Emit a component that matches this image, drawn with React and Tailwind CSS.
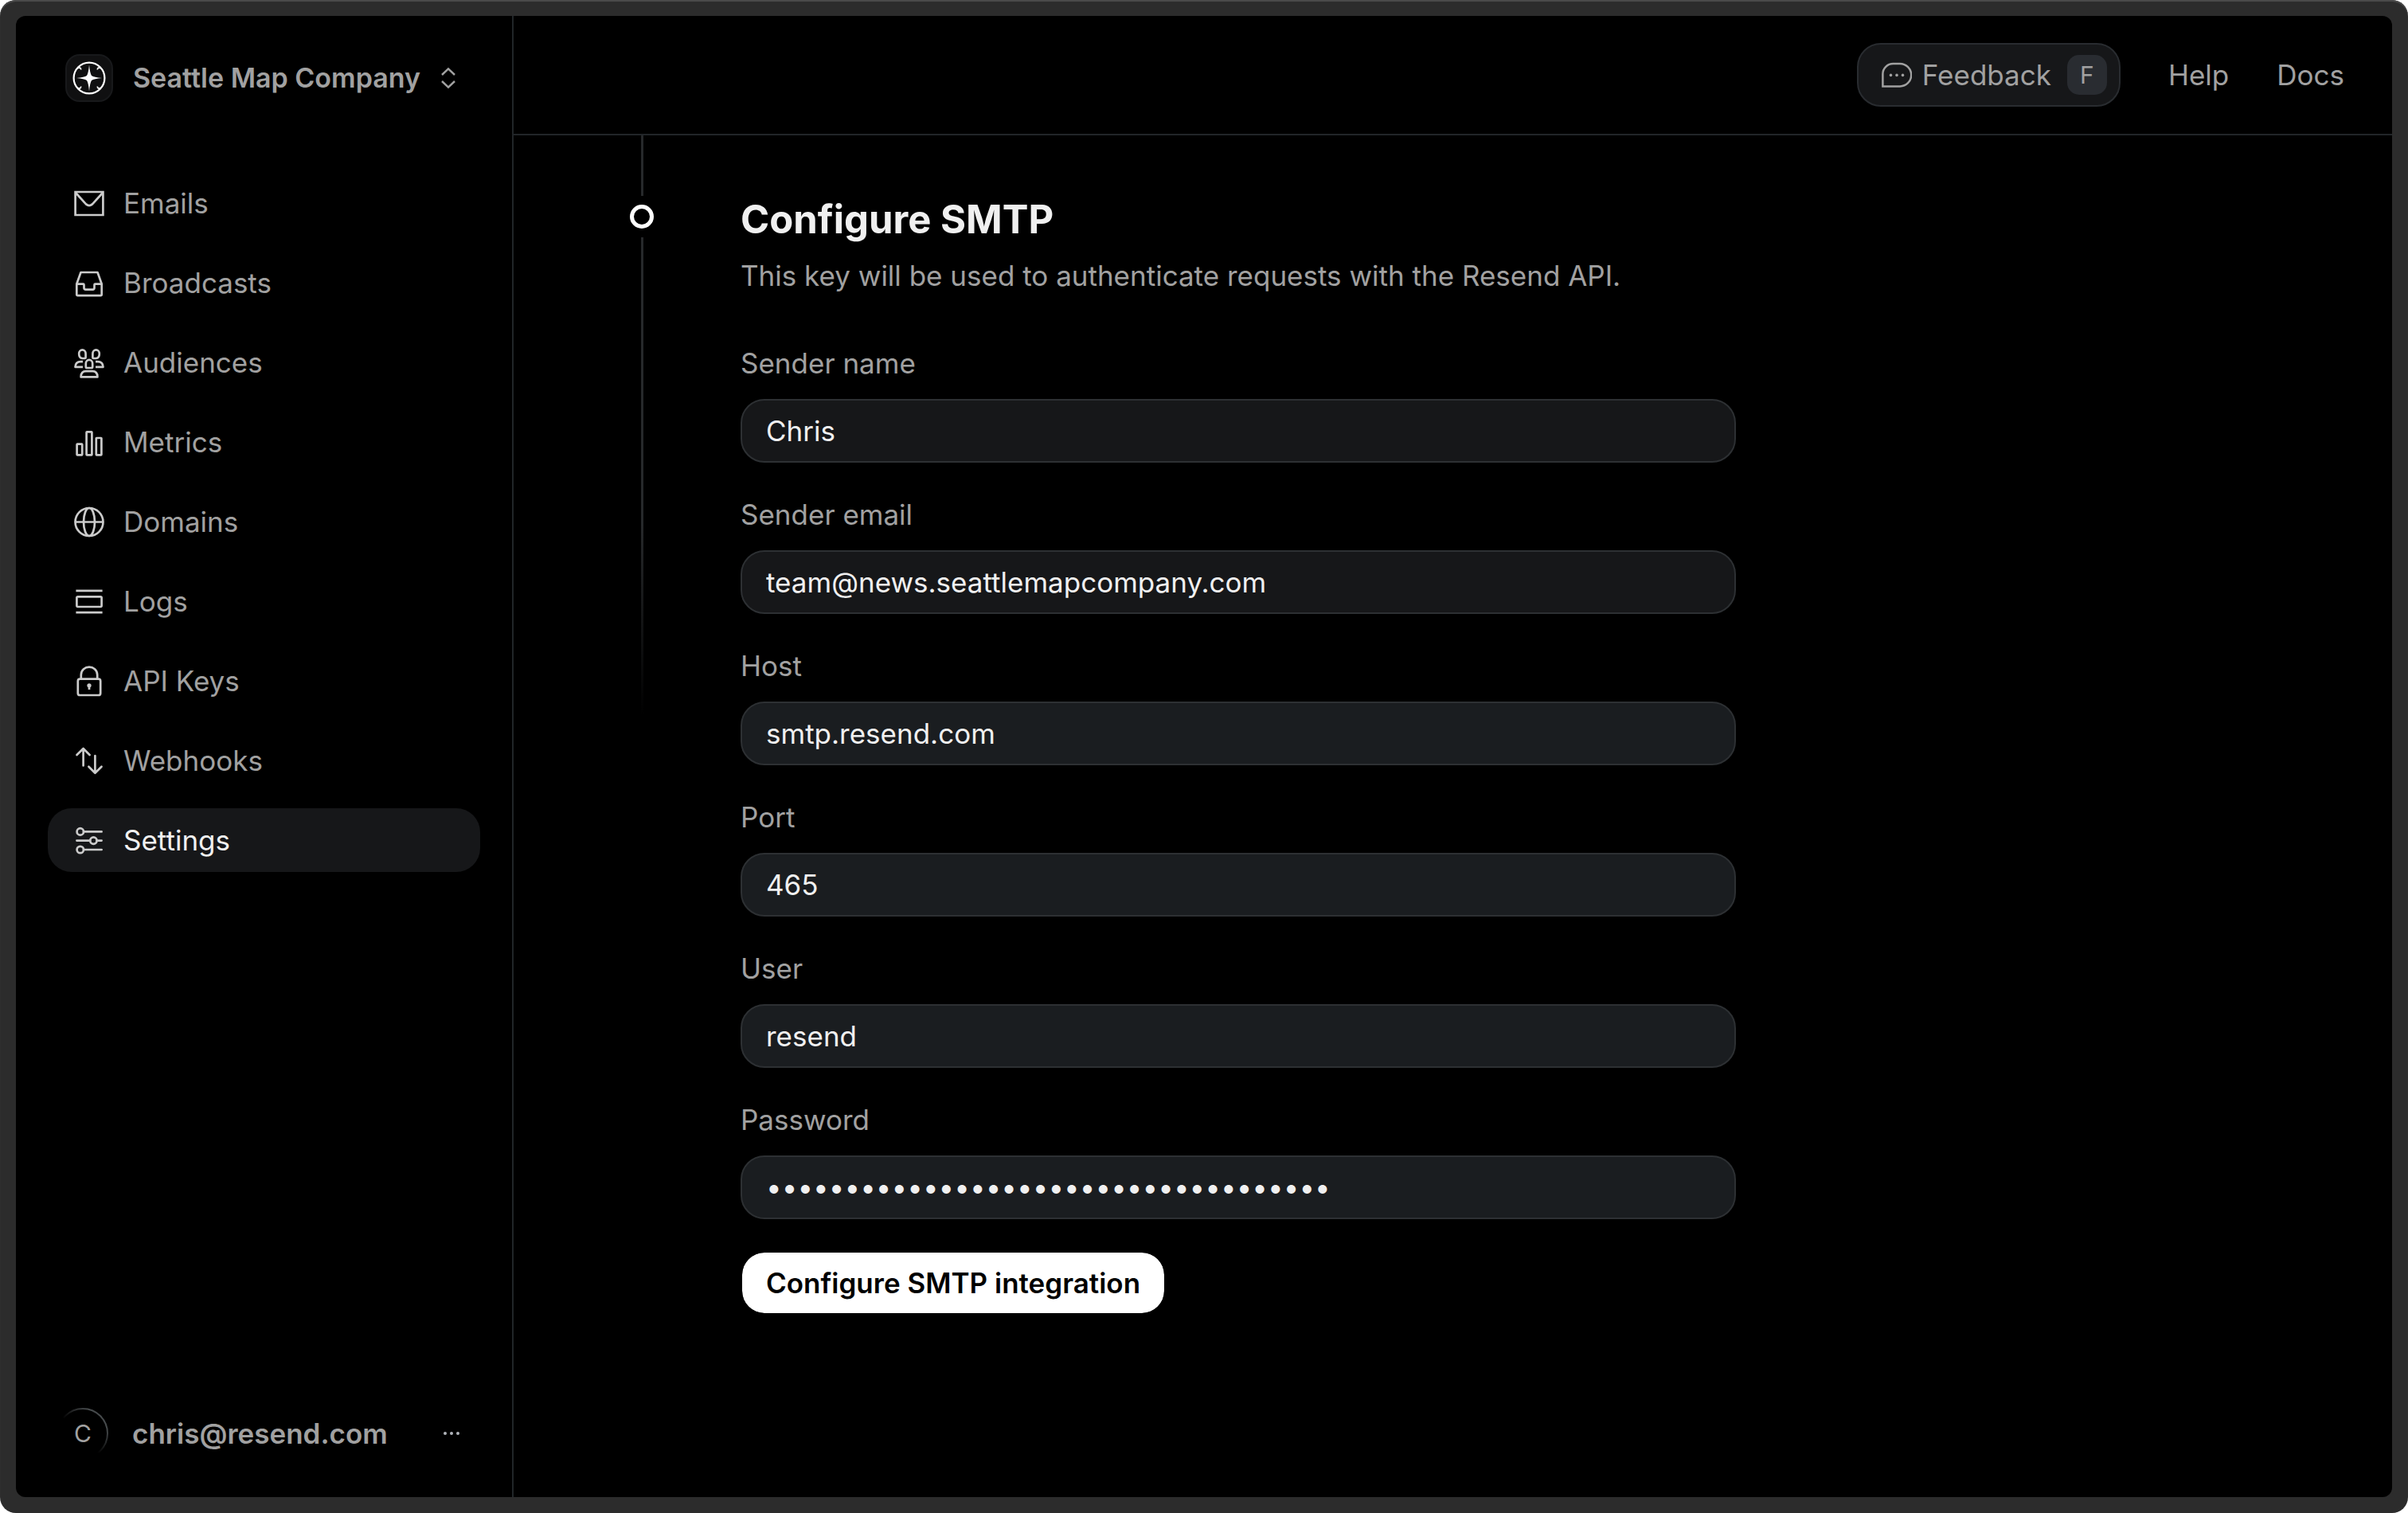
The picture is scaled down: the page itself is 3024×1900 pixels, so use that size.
const P = (props) => (
  <svg
    viewBox="-20 -20 40 40"
    className="size-10 shrink-0"
    fill="none"
    stroke="currentColor"
    strokeWidth="2.7"
    strokeLinejoin="round"
    aria-hidden="true"
  >
    {props.children}
  </svg>
);

const icons = {
  mail: (
    <P>
      <path strokeLinejoin="miter" d="M-17.4 -14H17.4V15H-17.4Z" />
      <path d="M-17 -13L-4 1.4Q0 4.8 4 1.4L17 -13" />
    </P>
  ),
  inbox: (
    <P>
      <path d="M-10.5 -13H10.5L15.7 1.5V14.8Q15.7 16.2 14.3 16.2H-14.3Q-15.7 16.2 -15.7 14.8V1.5Z" />
      <path d="M-15.7 1.7H-7.5Q-6.5 1.7 -6.5 2.7V6.5Q-6.5 8.6 -4.4 8.6H4.4Q6.5 8.6 6.5 6.5V2.7Q6.5 1.7 7.5 1.7H15.7" />
    </P>
  ),
  people: (
    <P>
      <path d="M-12.8 -10.8C-12.8 -17.2 -4.4 -17.2 -4.4 -10.8V-6Q-4.4 -5 -5.4 -5H-8.6Q-12.8 -5.4 -12.8 -10.8Z" />
      <path d="M12.8 -10.8C12.8 -17.2 4.4 -17.2 4.4 -10.8V-6Q4.4 -5 5.4 -5H8.6Q12.8 -5.4 12.8 -10.8Z" />
      <path d="M-4.2 1.6C-4.2 -4.6 4.2 -4.6 4.2 1.6V5.4Q4.2 7 2.6 7H-2.6Q-4.2 7 -4.2 5.4Z" />
      <path d="M-8 -.8H-10.5C-15 -.8 -17.3 2 -17.5 5.9H-8M8 -.8H10.5C15 -.8 17.3 2 17.5 5.9H8" />
      <path d="M-10.4 18.4C-10.4 13.6 -8.2 11.2 -4 11.2H4C8.2 11.2 10.4 13.6 10.4 18.4Z" />
    </P>
  ),
  bars: (
    <P>
      <rect x="-15.4" y="2.6" width="6.6" height="13.8" rx=".6" />
      <rect x="-3.4" y="-12.6" width="6.8" height="29" rx=".6" />
      <rect x="8.8" y="-5" width="6.6" height="21.4" rx=".6" />
    </P>
  ),
  globe: (
    <P>
      <circle r="17.5" cx="0" cy=".5" />
      <ellipse rx="7" ry="17.5" cx="0" cy=".5" />
      <path d="M-17.5 .5H17.5" />
    </P>
  ),
  logs: (
    <P>
      <path d="M-16.6 -13.2H16.6M-16.6 14.2H16.6" />
      <rect x="-15.6" y="-5.6" width="31.2" height="12.6" rx="1.4" />
    </P>
  ),
  lock: (
    <P>
      <rect x="-14.2" y="-2.4" width="28.4" height="20.4" rx="2.6" />
      <path d="M-10.2 -2.4V-7.4C-10.2 -20.6 10.2 -20.6 10.2 -7.4V-2.4" />
      <path d="M0 5.6V11" />
      <circle cy="5.8" r="1.3" />
    </P>
  ),
  arrows: (
    <P>
      <path strokeLinecap="round" d="M-7.4 6.4V-15M-15.5 -7L-7.4 -15L.6 -7M7.4 -6V15.8M-.6 7.8L7.4 15.8L15.5 7.8" />
    </P>
  ),
  sliders: (
    <P>
      <circle cx="-11.2" cy="-10.6" r="4.2" />
      <circle cx="5.4" cy=".6" r="4.2" />
      <circle cx="-11.2" cy="12" r="4.2" />
      <path strokeLinecap="round" d="M-7 -10.6H15.6M-15.6 .6H1.2M9.6 .6H15.6M-7 12H15.6" />
    </P>
  ),
};

const nav = [
  ["Emails", "mail"],
  ["Broadcasts", "inbox"],
  ["Audiences", "people"],
  ["Metrics", "bars"],
  ["Domains", "globe"],
  ["Logs", "logs"],
  ["API Keys", "lock"],
  ["Webhooks", "arrows"],
  ["Settings", "sliders"],
];

const fields = [
  { id: "sender-name", label: "Sender name", value: "Chris" },
  { id: "sender-email", label: "Sender email", value: "team@news.seattlemapcompany.com", type: "email" },
  { id: "host", label: "Host", value: "smtp.resend.com", readOnly: true },
  { id: "port", label: "Port", value: "465", readOnly: true },
  { id: "user", label: "User", value: "resend", readOnly: true },
  { id: "password", label: "Password", value: "re_abcdefgh_ijklmnopqrstuvwxyz012345", type: "password", readOnly: true },
];

function Logo() {
  return (
    <span className="flex size-15 items-center justify-center rounded-[18px] border-2 border-[#18191b] bg-[#101011]">
      <svg viewBox="-22 -22 44 44" className="size-11" fill="none" stroke="#fff" aria-hidden="true">
        <circle r="19.4" strokeWidth="2.2" />
        <path fill="#fff" stroke="none" d="M0 -16.5Q1 -6 3 -3Q6 -1 16 0Q6 1 3 3Q1 6 0 16.5Q-1 6 -3 3Q-6 1 -16 0Q-6 -1 -3 -3Q-1 -6 0 -16.5Z" />
        <path strokeWidth="1.8" d="M-14.5 -12.5Q-10 -14 -10.5 -10.5M14.5 -12.5Q10 -14 10.5 -10.5M-14.5 12.5Q-10 14 -10.5 10.5M14.5 12.5Q10 14 10.5 10.5" />
      </svg>
    </span>
  );
}

function Sidebar() {
  return (
    <aside className="flex w-[625px] shrink-0 flex-col border-r-2 border-[#212528] px-10">
      <button type="button" className="mt-12 flex items-center pl-[22px] text-left">
        <Logo />
        <span className="ml-[25px] text-[34px] leading-[60px] font-semibold">Seattle Map Company</span>
        <svg viewBox="0 0 18 28" className="ml-[26px] h-7 w-[18px]" fill="none" stroke="currentColor" strokeWidth="2.5" aria-hidden="true">
          <path d="M1 10L9 2.4L17 10M1 18L9 25.6L17 18" />
        </svg>
      </button>
      <nav className="mt-[87px] flex flex-col gap-5">
        {nav.map(([label, icon]) => (
          <a
            key={label}
            href="#"
            aria-current={label === "Settings" ? "page" : undefined}
            className="flex h-20 items-center gap-[23px] rounded-[30px] px-8 text-[35px] aria-[current=page]:bg-[#161719] aria-[current=page]:text-[#f0f0f0]"
          >
            <span className="text-[#cbcbcb]">{icons[icon]}</span>
            {label}
          </a>
        ))}
      </nav>
      <div className="mt-auto mb-12 flex items-center pr-6 pl-[12px] font-semibold">
        <span className="relative flex size-16 items-center justify-center text-[30px] font-normal">
          <svg viewBox="-32 -32 64 64" className="absolute inset-0 size-16" fill="none" aria-hidden="true">
            <defs>
              <linearGradient id="ring" x1="1" y1="0" x2="0" y2="1">
                <stop offset="0.2" stopColor="#464a4c" />
                <stop offset="0.55" stopColor="#000" />
              </linearGradient>
            </defs>
            <circle r="31" stroke="url(#ring)" strokeWidth="2" />
          </svg>
          C
        </span>
        <span className="ml-[30px] text-[35px] leading-[60px]">chris@resend.com</span>
        <button type="button" aria-label="Account menu" className="ml-auto">
          <svg viewBox="0 0 24 6" className="h-1.5 w-6" fill="#b0b4ba" aria-hidden="true">
            <circle cx="4" cy="3" r="2" />
            <circle cx="12" cy="3" r="2" />
            <circle cx="20" cy="3" r="2" />
          </svg>
        </button>
      </div>
    </aside>
  );
}

function Header() {
  return (
    <header className="flex h-[150px] items-center justify-end gap-[60px] border-b-2 border-[#212528] pr-[60px] text-[35px]">
      <button type="button" className="flex h-20 items-center rounded-[30px] border-2 border-[#292c30] bg-[#161719] pr-[15px] pl-[29px]">
        <svg viewBox="0 0 38 32" className="h-8 w-[38px]" fill="none" stroke="currentColor" strokeWidth="2.5" aria-hidden="true">
          <path d="M1.4 30.4V15A13 13 0 0 1 14.4 2H23A14.2 14.2 0 0 1 23 30.4Z" />
          <g fill="currentColor" stroke="none">
            <circle cx="11.5" cy="16.4" r="1.8" />
            <circle cx="19" cy="16.4" r="1.8" />
            <circle cx="26.5" cy="16.4" r="1.8" />
          </g>
        </svg>
        <span className="ml-[13px]">Feedback</span>
        <kbd className="ml-5 flex size-[50px] items-center justify-center rounded-[15px] bg-[#292c31] font-[Inter] text-[30px]">F</kbd>
      </button>
      <a href="#">Help</a>
      <a href="#">Docs</a>
    </header>
  );
}

export default function App() {
  return (
    <div className="flex min-h-screen rounded-[20px] bg-[#2c2c2c] p-5 font-[Inter,sans-serif] text-[#a1a1a1] shadow-[inset_0_2px_1px_#4c4c4c]">
      <div className="flex grow rounded-xl bg-black">
        <Sidebar />
        <div className="flex grow flex-col">
          <Header />
          <main className="flex pl-[143px]">
            <div className="flex w-9 flex-col items-center" aria-hidden="true">
              <div className="h-[76px] w-[3px] bg-[#27292b]" />
              <div className="my-[11px] size-[30px] rounded-full border-[5px] border-white" />
              <div className="h-[600px] w-[3px] bg-linear-to-b from-[#27292b] from-60% to-transparent" />
            </div>
            <form className="ml-[106px] w-[1250px] pt-[76px]" onSubmit={(e) => e.preventDefault()}>
              <h1 className="text-[49px] leading-[60px] font-bold text-[#f0f0f0]">Configure SMTP</h1>
              <p className="mt-2.5 text-[35px] leading-[60px]">
                This key will be used to authenticate requests with the Resend API.
              </p>
              <div className="mt-[60px] flex flex-col gap-[45px]">
                {fields.map(({ id, label, ...rest }) => (
                  <div key={id} className="flex flex-col gap-[25px]">
                    <label htmlFor={id} className="text-[35px] leading-10">{label}</label>
                    <input
                      id={id}
                      defaultValue={rest.value}
                      type={rest.type ?? "text"}
                      readOnly={rest.readOnly}
                      className="h-20 rounded-[30px] border-2 border-[#2d3033] bg-[#161719] px-[30px] text-[35px] text-[#f0f0f0] read-only:bg-[#1a1d20]"
                    />
                  </div>
                ))}
              </div>
              <button type="submit" className="mt-10 h-20 rounded-[30px] border-2 border-black bg-white bg-clip-padding px-[30px] text-[35px] font-semibold text-black">
                Configure SMTP integration
              </button>
            </form>
          </main>
        </div>
      </div>
    </div>
  );
}
